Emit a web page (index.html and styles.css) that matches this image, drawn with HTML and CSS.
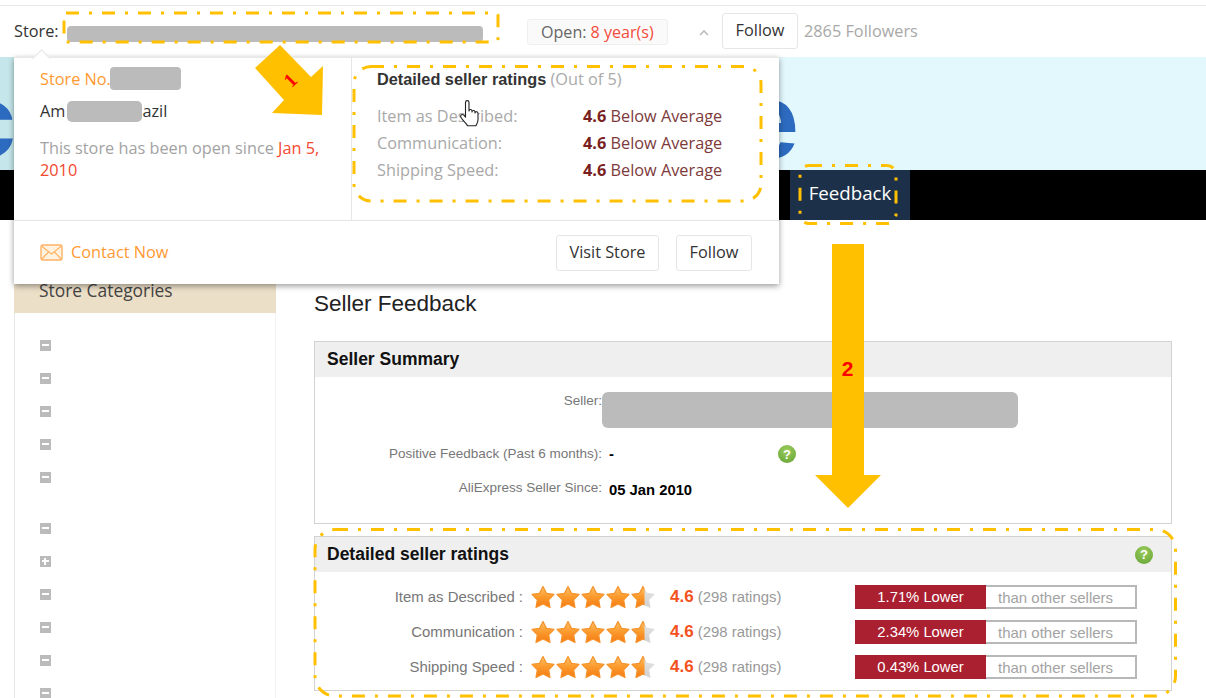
FILE: index.html
```html
<!DOCTYPE html>
<html lang="en">
<head>
<meta charset="utf-8">
<title>Seller Feedback</title>
<link rel="stylesheet" href="styles.css">
</head>
<body>
<div class="page">
  <header class="store-bar">
    <span class="store-label">Store:</span>
    <span class="redact redact-store"></span>
    <span class="open-pill">Open: <em>8 year(s)</em></span>
    <svg class="chevron" width="10" height="6" viewBox="0 0 10 6"><path d="M1 5l4-4 4 4" fill="none" stroke="#bbb" stroke-width="1.6"/></svg>
    <button class="btn btn-top">Follow</button>
    <span class="followers">2865 Followers</span>
  </header>

  <div class="banner"><span class="logo-c">c</span><span class="logo-e">e</span></div>

  <nav class="nav"><span class="nav-tab">Feedback</span></nav>

  <div class="content">
    <aside class="sidebar">
      <h3 class="side-title">Store Categories</h3>
      <ul class="cats">
        <li><i class="tog"></i></li><li><i class="tog"></i></li><li><i class="tog"></i></li><li><i class="tog"></i></li><li><i class="tog"></i></li>
      </ul>
      <ul class="cats cats-second">
        <li><i class="tog"></i></li><li><i class="tog plus"></i></li><li><i class="tog"></i></li><li><i class="tog"></i></li><li><i class="tog"></i></li><li><i class="tog"></i></li>
      </ul>
    </aside>

    <main class="main">
      <h1 class="title">Seller Feedback</h1>

      <section class="box box-summary">
        <h2 class="box-head">Seller Summary</h2>
        <div class="summary">
          <div class="sum-row sum-seller"><span class="sum-label">Seller:</span><span class="redact redact-seller"></span></div>
          <div class="sum-row sum-positive"><span class="sum-label">Positive Feedback (Past 6 months):</span><b class="sum-val sum-dash">-</b><span class="help"></span></div>
          <div class="sum-row sum-since"><span class="sum-label">AliExpress Seller Since:</span><b class="sum-val">05 Jan 2010</b></div>
        </div>
      </section>

      <section class="box box-detail">
        <h2 class="box-head">Detailed seller ratings<span class="help help-head"></span></h2>
        <div class="ratings">
          <div class="rate-row">
            <span class="rate-label">Item as Described :</span>
            <svg class="stars" viewBox="0 0 125 24"><use href="#s" x="0"/><use href="#s" x="25"/><use href="#s" x="50"/><use href="#s" x="75"/><use href="#sh" x="100"/></svg>
            <span class="rate-num"><b>4.6</b> (298 ratings)</span>
            <span class="bar"><span class="bar-red">1.71% Lower</span><span class="bar-text">than other sellers</span></span>
          </div>
          <div class="rate-row">
            <span class="rate-label">Communication :</span>
            <svg class="stars" viewBox="0 0 125 24"><use href="#s" x="0"/><use href="#s" x="25"/><use href="#s" x="50"/><use href="#s" x="75"/><use href="#sh" x="100"/></svg>
            <span class="rate-num"><b>4.6</b> (298 ratings)</span>
            <span class="bar"><span class="bar-red">2.34% Lower</span><span class="bar-text">than other sellers</span></span>
          </div>
          <div class="rate-row">
            <span class="rate-label">Shipping Speed :</span>
            <svg class="stars" viewBox="0 0 125 24"><use href="#s" x="0"/><use href="#s" x="25"/><use href="#s" x="50"/><use href="#s" x="75"/><use href="#sh" x="100"/></svg>
            <span class="rate-num"><b>4.6</b> (298 ratings)</span>
            <span class="bar"><span class="bar-red">0.43% Lower</span><span class="bar-text">than other sellers</span></span>
          </div>
        </div>
      </section>
    </main>
  </div>

  <div class="popup">
    <div class="pop-top">
      <div class="pop-left">
        <div class="pop-no">Store No.<span class="redact redact-no"></span></div>
        <div class="pop-addr">Am<span class="redact redact-addr"></span>azil</div>
        <p class="pop-since">This store has been open since <em>Jan 5, 2010</em></p>
      </div>
      <div class="pop-right">
        <div class="pop-heading"><b>Detailed seller ratings</b> <span>(Out of 5)</span></div>
        <div class="pop-rate"><span>Item as Described:</span><span class="pop-val"><b>4.6</b> Below Average</span></div>
        <div class="pop-rate"><span>Communication:</span><span class="pop-val"><b>4.6</b> Below Average</span></div>
        <div class="pop-rate"><span>Shipping Speed:</span><span class="pop-val"><b>4.6</b> Below Average</span></div>
      </div>
    </div>
    <div class="pop-foot">
      <svg class="mail" width="23" height="17" viewBox="0 0 23 17"><rect x="1" y="1" width="21" height="15" rx="1.5" fill="#fff3e0" stroke="#ffb366" stroke-width="1.4"/><path d="M1.5 2l10 8 10-8M1.500 15.500l7-7.500M21.500 15.500l-7-7.500" fill="none" stroke="#ffb366" stroke-width="1.2"/></svg>
      <span class="contact">Contact Now</span>
      <button class="btn btn-visit">Visit Store</button>
      <button class="btn btn-follow">Follow</button>
    </div>
  </div>

  <svg class="marks" width="1206" height="698" viewBox="0 0 1206 698">
    <defs>
      <linearGradient id="g" x1="0" y1="0" x2="0" y2="1"><stop offset="0" stop-color="#fdc069"/><stop offset=".5" stop-color="#fb9a2c"/><stop offset="1" stop-color="#f47a14"/></linearGradient>
      <linearGradient id="gg" x1="0" y1="0" x2="0" y2="1"><stop offset="0" stop-color="#e8e8e8"/><stop offset="1" stop-color="#cfcfcf"/></linearGradient>
      <clipPath id="halfclip"><rect x="0" y="0" width="13.500" height="24"/></clipPath>
      <path id="starshape" d="M12 1.500L15.500 8.300L23 9.400L17.700 14.850L19 22.500L12 19L5 22.500L6.300 14.850L1 9.400L8.500 8.300z"/>
      <symbol id="s" viewBox="0 0 24 24" width="24" height="24"><use href="#starshape" fill="url(#g)" stroke="#f79228" stroke-width="1.200" stroke-linejoin="round"/></symbol>
      <symbol id="sh" viewBox="0 0 24 24" width="24" height="24"><use href="#starshape" fill="url(#gg)" stroke="#dadada" stroke-width="1" stroke-linejoin="round"/><g clip-path="url(#halfclip)"><use href="#starshape" fill="url(#g)" stroke="#f79228" stroke-width="1.200" stroke-linejoin="round"/></g></symbol>
    </defs>
    <g class="dash">
      <rect x="64" y="13" width="434" height="29" rx="2"/>
      <rect x="354" y="66.500" width="407" height="134.500" rx="17"/>
      <rect x="800" y="165.500" width="96" height="58" rx="9"/>
      <rect x="315" y="529.500" width="860.500" height="166.500" rx="20"/>
    </g>
    <polygon class="arrow" points="255,68 280,45 311,77 323,66 322,115 272,113 284,100"/>
    <polygon class="arrow" points="832,244 864,244 864,475 881,475 848,508 815,475 832,475"/>
    <text class="num num1" transform="translate(290 80) rotate(-45)" text-anchor="middle" y="7">1</text>
    <text class="num num2" x="847.500" y="376" text-anchor="middle">2</text>
    <path class="hand" d="M465.500 102.500c0-2.500 3.500-2.500 3.500 0v8.500c0-2 3-2 3 0v1c0-2 3-2 3 0v1c0-1.800 3-1.800 3 .2v6.500c0 2.500-1 4-2 6h-8.500c-1-2.500-6-6-6.800-9-.5-2 1.800-3 3.300-1.500l1.500 2z"/>
  </svg>
</div>
</body>
</html>
```
FILE: styles.css
```css
* { box-sizing: border-box; }
html, body { margin: 0; padding: 0; background: #fff; }
.page {
  position: relative;
  width: 1206px;
  height: 698px;
  overflow: hidden;
  font-family: "Open Sans", sans-serif;
  font-size: 16.300px;
  color: #333;
}
.redact { display: inline-block; background: #bbb; border-radius: 4px; }

/* top bar */
.store-bar {
  display: flex;
  align-items: center;
  height: 57px;
  padding: 6px 0 2px 14px;
  background: linear-gradient(#fff 5px, #e8e8e8 5px, #e8e8e8 6px, #fff 6px);
}
.store-label { width: 53px; }
.redact-store { width: 416px; height: 16px; margin-top: 7px; }
.open-pill {
  display: flex;
  align-items: center;
  gap: 4px;
  height: 26px;
  margin: 3px 0 0 44px;
  padding: 0 13px;
  width: 141px;
  font-size: 16.100px;
  white-space: nowrap;
  background: #fafafa;
  border: 1px solid #eee;
  border-radius: 3px;
  color: #666;
}
.open-pill em { font-style: normal; color: #f44b3c; }
.chevron { margin: 5px 0 0 31px; }
.btn {
  font-family: "Open Sans", sans-serif;
  font-size: 16.300px;
  color: #333;
  background: #fff;
  border: 1px solid #e6e6e6;
  border-radius: 3px;
  padding: 0 0 2px;
  height: 36px;
}
.btn-top { width: 76px; margin: 1px 0 0 13px; }
.followers { margin-left: 6px; color: #a8a8a8; white-space: nowrap; }

/* banner + nav */
.banner {
  display: flex;
  justify-content: space-between;
  width: 100%;
  height: 113px;
  overflow: hidden;
  padding: 10px 407px 0 0;
  background: linear-gradient(to right, #c5e6ea 14px, #e3f8fd 14px);
  font-family: "Liberation Sans", sans-serif;
  font-weight: 700;
  color: #2d6bc0;
}
.logo-c { font-size: 104px; line-height: 108px; margin-left: -42px; }
.logo-e { font-size: 108px; line-height: 108px; }
.nav {
  display: flex;
  height: 50px;
  padding-left: 790px;
  background: #000;
}
.nav-tab {
  display: flex;
  align-items: center;
  justify-content: center;
  width: 120px;
  padding-bottom: 6px;
  background: #1c3049;
  color: #fff;
  font-size: 18.700px;
}

/* content */
.content { display: flex; padding-left: 14px; }
.sidebar {
  width: 262px;
  margin-top: 50px;
  height: 600px;
  border-left: 1px solid #e8e8e8;
  border-right: 1px solid #f2f2f2;
}
.side-title {
  margin: 0 -1px;
  height: 43px;
  padding: 8px 0 0 25px;
  background: #ecdfc8;
  font-size: 17.400px;
  font-weight: 400;
  color: #444;
}
.cats { list-style: none; margin: 0; padding: 16px 0 0 25px; }
.cats-second { padding-top: 18px; }
.cats li { display: flex; align-items: center; height: 33px; }
.tog {
  position: relative;
  display: block;
  width: 11px;
  height: 11px;
  background: #bbb;
}
.tog::before {
  content: "";
  position: absolute;
  left: 2px;
  top: 4px;
  width: 7px;
  height: 2px;
  background: #fff;
}
.tog.plus::after {
  content: "";
  position: absolute;
  left: 4px;
  top: 2px;
  width: 2px;
  height: 7px;
  background: #fff;
}
.main { width: 858px; margin-left: 38px; font-family: "Liberation Sans", sans-serif; }
.title {
  margin: 0;
  height: 121px;
  padding-top: 71px;
  font-size: 22.500px;
  line-height: 26px;
  font-weight: 400;
  color: #222;
}
.box { border: 1px solid #d2d2d2; }
.box-summary { height: 183px; }
.box-detail { height: 155px; margin-top: 12px; }
.box-head {
  display: flex;
  align-items: center;
  justify-content: space-between;
  margin: 0;
  height: 35px;
  padding: 0 18px 0 12px;
  background: #efefef;
  font-size: 17.500px;
  color: #111;
}
.summary { padding-top: 16px; }
.sum-row { display: flex; font-size: 13.500px; color: #777; }
.sum-label { width: 287px; text-align: right; white-space: nowrap; }
.sum-seller { height: 52px; }
.sum-positive .sum-label { padding-top: 1px; }
.redact-seller { width: 416px; height: 36px; margin-top: -1px; border-radius: 6px; }
.sum-positive { height: 35px; align-items: flex-start; }
.sum-val { margin-left: 7px; color: #000; font-size: 14.800px; }
.sum-dash { width: 169px; padding-top: 1px; }
.sum-since .sum-val { padding-top: 2px; }
.help {
  display: inline-flex;
  align-items: center;
  justify-content: center;
  width: 18px;
  height: 18px;
  border-radius: 50%;
  background: radial-gradient(circle at 50% 30%, #9ccc5c, #62a233);
}
.help::before {
  content: "?";
  color: #fff;
  font: 700 13px "Liberation Sans", sans-serif;
}
.ratings { padding-top: 7px; }
.rate-row { display: flex; align-items: center; height: 35px; color: #777; font-size: 14.900px; }
.rate-label { width: 208px; text-align: right; white-space: nowrap; }
.stars { width: 125px; height: 24px; margin-left: 8px; flex: none; }
.rate-num { width: 185px; margin-left: 14px; color: #999; font-size: 14.900px; white-space: nowrap; }
.rate-num b { color: #f4511e; font-size: 17px; }
.bar {
  display: flex;
  width: 282px;
  height: 24px;
  border: 1px solid #b8b8b8;
  border-width: 2px 2px 2px 0;
}
.bar-red {
  display: flex;
  align-items: center;
  justify-content: center;
  width: 131px;
  margin: -2px 0;
  background: #ab2030;
  color: #fff;
  font-size: 14.800px;
}
.bar-text { padding: 1px 0 0 12px; color: #a3a3a3; font-size: 15px; white-space: nowrap; line-height: 20px; }

/* popup */
.popup {
  position: absolute;
  left: 14px;
  top: 57px;
  width: 765px;
  height: 227px;
  background: #fff;
  border-top: 1px solid #e8e8e8;
  box-shadow: 0 2px 6px rgba(0, 0, 0, .4);
}
.popup::before {
  content: "";
  position: absolute;
  left: 21px;
  top: -6px;
  width: 12px;
  height: 12px;
  background: #fff;
  border-left: 1px solid #e6e6e6;
  border-top: 1px solid #e6e6e6;
  transform: rotate(45deg);
}
.pop-top { position: relative; display: flex; height: 163px; border-bottom: 1px solid #e6e6e6; }
.pop-left { width: 338px; padding: 7px 20px 0 26px; border-right: 1px solid #e6e6e6; }
.pop-no { display: flex; align-items: center; height: 27px; color: #ff9a33; }
.redact-no { width: 71px; height: 23px; margin-left: -1px; }
.pop-addr { display: flex; align-items: center; height: 30px; margin-top: 4px; color: #333; }
.redact-addr { width: 75px; height: 21px; margin-left: 2px; border-radius: 5px; }
.pop-since { margin: 11px 0 0; line-height: 22px; color: #a3a3a3; }
.pop-since em { font-style: normal; color: #f4482f; }
.pop-right { padding: 10px 0 0 25px; }
.pop-heading { height: 34px; color: #aaa; white-space: nowrap; }
.pop-heading b { font-family: "Liberation Sans", sans-serif; color: #333; }
.pop-rate { display: flex; height: 27px; align-items: center; color: #a8a8a8; }
.pop-rate > span:first-child { width: 206px; white-space: nowrap; }
.pop-val { color: #7d3a3a; white-space: nowrap; }
.pop-val b { color: #7a1f1f; font-weight: 700; }
.pop-foot { display: flex; align-items: center; height: 63px; padding: 0 27px 0 26px; }
.mail { flex: none; }
.contact { margin: 0 auto 2px 8px; color: #ff9a33; }
.btn-visit { width: 103px; }
.btn-follow { width: 76px; margin-left: 17px; }

/* annotations on top of the screenshot */
.marks { position: absolute; left: 0; top: 0; pointer-events: none; }
.dash rect {
  fill: none;
  stroke: #ffc000;
  stroke-width: 3;
  stroke-dasharray: 13 10 3 10;
}
.arrow { fill: #ffc000; }
.num { font-family: "Liberation Sans", sans-serif; font-weight: 700; fill: #f00; font-size: 21px; }
.num1 { font-family: "Liberation Serif", serif; font-size: 20px; }
.hand { fill: #fff; stroke: #222; stroke-width: 1.100; stroke-linejoin: round; }
```
